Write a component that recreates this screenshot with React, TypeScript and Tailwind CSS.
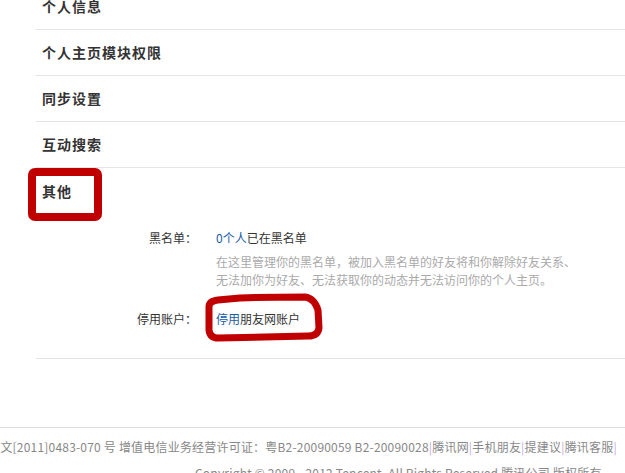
import React from 'react';

const rows = ['个人信息', '个人主页模块权限', '同步设置', '互动搜索'];

const cjk = { fontFamily: '"Noto Sans CJK SC", "Noto Sans", sans-serif' };

function App() {
  return (
    <div className="relative h-[473px] w-[625px] overflow-hidden bg-white text-[#333]" style={cjk}>
      <div className="ml-[36px] -mt-[16px]">
        {rows.map((r) => (
          <div
            key={r}
            className="flex h-[46px] items-center border-b border-[#e5e5e5] pl-[6px] text-[14px] font-bold tracking-[1px]"
          >
            {r}
          </div>
        ))}

        <div className="border-b border-[#e5e5e5] pb-[30px]">
          <div className="flex h-[46px] items-center pl-[6px] text-[14px] font-bold tracking-[1px]">其他</div>

          <div className="mt-[15px] flex text-[12px] leading-[18px]">
            <div className="w-[161px] text-right">黑名单：</div>
            <div className="ml-[19px]">
              <div>
                <span className="text-[#1a5ca8]">0个人</span>已在黑名单
              </div>
              <div className="mt-[6px] text-[#aaa]">
                在这里管理你的黑名单，被加入黑名单的好友将和你解除好友关系、
                <br />
                无法加你为好友、无法获取你的动态并无法访问你的个人主页。
              </div>
            </div>
          </div>

          <div className="mt-[21px] flex text-[12px] leading-[18px]">
            <div className="w-[161px] text-right">停用账户：</div>
            <div className="ml-[19px]">
              <span className="text-[#1a5ca8]">停用</span>朋友网账户
            </div>
          </div>
        </div>
      </div>

      <div className="mt-[68px] border-t border-[#ddd] pt-[6px] text-[12px] leading-[26px] tracking-[0.2px] text-[#888]">
        <div className="-ml-[24px] whitespace-nowrap">
          粤网文[2011]0483-070 号 增值电信业务经营许可证：粤B2-20090059 B2-20090028
          <span className="text-[#c9a8d8]">|</span>腾讯网<span className="text-[#c9a8d8]">|</span>手机朋友
          <span className="text-[#c9a8d8]">|</span>提建议<span className="text-[#c9a8d8]">|</span>腾讯客服
          <span className="text-[#c9a8d8]">|</span>
        </div>
        <div className="whitespace-nowrap pl-[195px]">
          Copyright © 2009 - 2012 Tencent. All Rights Reserved 腾讯公司 版权所有
        </div>
      </div>

      {/* red annotation marks */}
      <svg className="pointer-events-none absolute left-0 top-0" width="625" height="473">
        <rect x="32" y="172" width="66" height="45" rx="3" fill="none" stroke="#c00000" strokeWidth="8" />
        <path
          d="M 209 307 Q 209 301 218 300 L 240 298 Q 270 297 305 297 Q 314 298 318 310 L 319 328 Q 318 336 308 336 L 218 338 Q 210 338 209 330 Z"
          fill="none"
          stroke="#c00000"
          strokeWidth="7"
          strokeLinejoin="round"
        />
      </svg>
    </div>
  );
}

export default App;
